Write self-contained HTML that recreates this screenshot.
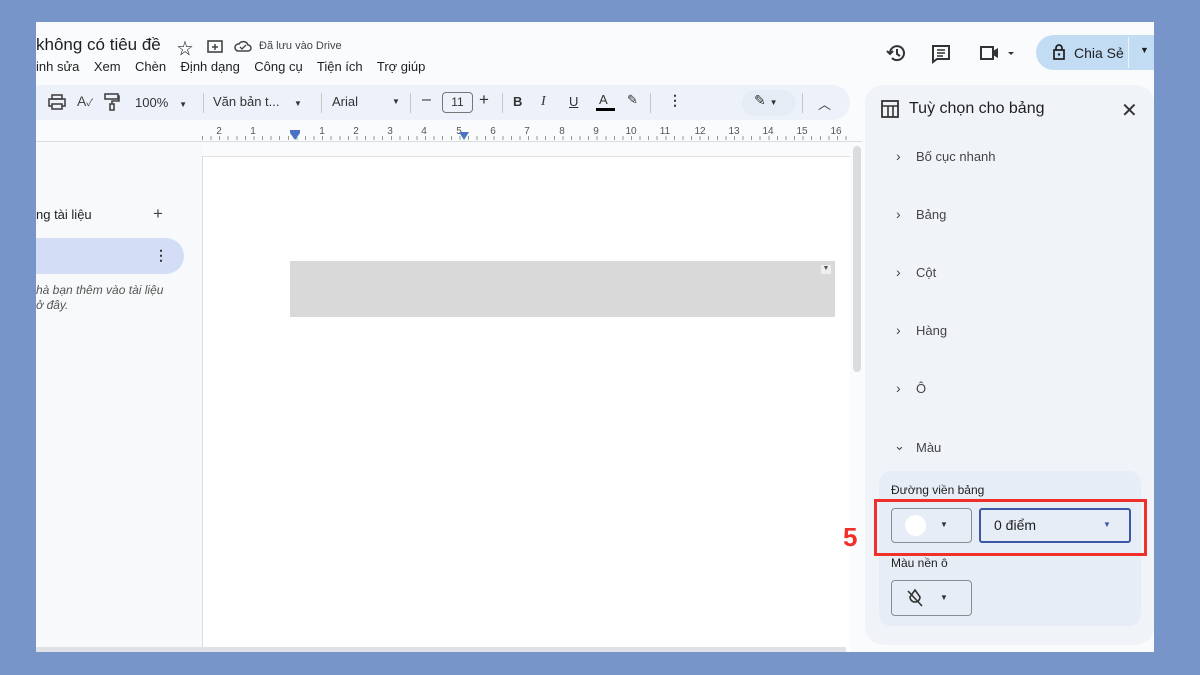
<!DOCTYPE html><html><head><meta charset="utf-8"><style>
*{margin:0;padding:0;box-sizing:border-box}
body{width:1200px;height:675px;background:#7895ca;font-family:"Liberation Sans","Noto Sans CJK SC",sans-serif;position:relative;overflow:hidden;color:#1f1f1f}
.a{position:absolute}
.scr{left:36px;top:22px;width:1118px;height:630px;background:#f9fbfd;overflow:hidden}
.t{position:absolute;white-space:nowrap}
.rn{position:absolute;top:104px;font-size:10px;color:#555;width:20px;margin-left:-10px;text-align:center}
</style></head><body>
<div class="a scr">
 <div class="a" style="left:0;top:0;width:1118px;height:63px;background:#f9fbfd"></div>
 <div class="t" style="left:0;top:13px;font-size:17px;color:#1f1f1f">không có tiêu đề</div>
 <div class="t" style="left:141px;top:13px;font-size:16px">☆</div>
 <svg class="a" style="left:171px;top:17px" width="16" height="14"><rect x="1" y="2" width="14" height="11" fill="none" stroke="#444" stroke-width="1.6"/><path d="M5 8h6M8 5v6" stroke="#444" stroke-width="1.5"/></svg>
 <svg class="a" style="left:198px;top:17px" width="18" height="13"><path d="M4 12h10a3 3 0 0 0 0-6 5 5 0 0 0-9-1 3.5 3.5 0 0 0-1 7z" fill="none" stroke="#444" stroke-width="1.5"/><path d="M6 8l2 2 4-4" fill="none" stroke="#444" stroke-width="1.3"/></svg>
 <div class="t" style="left:223px;top:18px;font-size:11px;color:#444">Đã lưu vào Drive</div>
 <div class="t" style="left:0;top:37px;font-size:13px;color:#1f1f1f">inh sửa&nbsp;&nbsp;&nbsp; Xem&nbsp;&nbsp;&nbsp; Chèn&nbsp;&nbsp;&nbsp; Định dạng&nbsp;&nbsp;&nbsp; Công cụ&nbsp;&nbsp;&nbsp; Tiện ích&nbsp;&nbsp;&nbsp; Trợ giúp</div>
 <svg class="a" style="left:850px;top:21px" width="20" height="20"><path d="M4 10a7 7 0 1 1 2 5" fill="none" stroke="#333" stroke-width="2"/><path d="M1 8l3 3 3-3" fill="none" stroke="#333" stroke-width="2"/><path d="M11 6v5l3 2" fill="none" stroke="#333" stroke-width="2"/></svg>
 <svg class="a" style="left:895px;top:22px" width="20" height="20"><path d="M2 2h16v13H6l-4 3z" fill="none" stroke="#333" stroke-width="2"/><path d="M6 6h8M6 9h8M6 12h6" stroke="#333" stroke-width="1.6"/></svg>
 <svg class="a" style="left:943px;top:23px" width="36" height="16"><path d="M2 2h12v12H2z" fill="none" stroke="#333" stroke-width="2"/><path d="M14 6l5-3v10l-5-3z" fill="#333"/><path d="M29 7l3 3 3-3z" fill="#333"/></svg>
 <div class="a" style="left:1000px;top:13px;width:118px;height:35px;background:#c2dcf3;border-radius:18px 0 0 18px"></div>
 <div class="a" style="left:1092px;top:15px;width:1px;height:31px;background:#f0f4f9"></div>
 <svg class="a" style="left:1016px;top:22px" width="14" height="16"><rect x="2" y="6" width="10" height="9" fill="none" stroke="#1f1f1f" stroke-width="1.7"/><path d="M4 6V4a3 3 0 0 1 6 0v2" fill="none" stroke="#1f1f1f" stroke-width="1.7"/><circle cx="7" cy="10.5" r="1.2" fill="#1f1f1f"/></svg>
 <div class="t" style="left:1038px;top:23px;font-size:14px;color:#1f1f1f">Chia Sẻ</div>
 <div class="t" style="left:1104px;top:23px;font-size:9px">▼</div>
 <div class="a" style="left:0;top:63px;width:814px;height:35px;background:#edf2fa;border-radius:0 18px 18px 0"></div>
 <svg class="a" style="left:12px;top:72px" width="18" height="16"><rect x="4" y="1" width="10" height="4" fill="none" stroke="#444" stroke-width="1.6"/><rect x="1" y="5" width="16" height="7" fill="none" stroke="#444" stroke-width="1.6"/><rect x="4" y="10" width="10" height="5" fill="#edf2fa" stroke="#444" stroke-width="1.6"/></svg>
 <div class="t" style="left:41px;top:71px;font-size:14px;color:#444">A<span style="font-size:10px">✓</span></div>
 <svg class="a" style="left:68px;top:71px" width="16" height="18"><rect x="1" y="1" width="13" height="5" fill="none" stroke="#444" stroke-width="1.6"/><path d="M14 3h1v5H8v3" fill="none" stroke="#444" stroke-width="1.6"/><rect x="6" y="11" width="4" height="6" fill="none" stroke="#444" stroke-width="1.6"/></svg>
 <div class="t" style="left:99px;top:73px;font-size:13px;color:#333">100%&nbsp;&nbsp;&nbsp;<span style="font-size:8px">▼</span></div>
 <div class="a" style="left:167px;top:71px;width:1px;height:20px;background:#c7c7c7"></div>
 <div class="t" style="left:177px;top:72px;font-size:13px;color:#333">Văn bản t...&nbsp;&nbsp;&nbsp;&nbsp;<span style="font-size:8px">▼</span></div>
 <div class="a" style="left:285px;top:71px;width:1px;height:20px;background:#c7c7c7"></div>
 <div class="t" style="left:296px;top:72px;font-size:13px;color:#333">Arial</div>
 <div class="t" style="left:356px;top:75px;font-size:8px;color:#333">▼</div>
 <div class="a" style="left:374px;top:71px;width:1px;height:20px;background:#c7c7c7"></div>
 <div class="t" style="left:386px;top:69px;font-size:16px;color:#333">–</div>
 <div class="a" style="left:406px;top:70px;width:31px;height:21px;border:1px solid #747775;border-radius:4px;font-size:12px;text-align:center;line-height:19px;color:#333">11</div>
 <div class="t" style="left:443px;top:68px;font-size:17px;color:#333">+</div>
 <div class="a" style="left:466px;top:71px;width:1px;height:20px;background:#c7c7c7"></div>
 <div class="t" style="left:477px;top:72px;font-size:13px;font-weight:bold;color:#333">B</div>
 <div class="t" style="left:505px;top:72px;font-size:14px;font-style:italic;font-family:'Liberation Serif',serif;color:#333">I</div>
 <div class="t" style="left:533px;top:72px;font-size:13px;text-decoration:underline;color:#333">U</div>
 <div class="t" style="left:563px;top:70px;font-size:13px;color:#333">A</div>
 <div class="a" style="left:560px;top:86px;width:19px;height:3px;background:#000"></div>
 <div class="t" style="left:591px;top:70px;font-size:13px;color:#333">✎</div>
 <div class="a" style="left:614px;top:71px;width:1px;height:20px;background:#c7c7c7"></div>
 <div class="t" style="left:632px;top:70px;font-size:14px;font-weight:bold;color:#333">⋮</div>
 <div class="a" style="left:706px;top:68px;width:54px;height:26px;background:#e6ecf6;border-radius:13px"></div>
 <div class="t" style="left:718px;top:70px;font-size:14px;color:#333">✎ <span style="font-size:8px">▼</span></div>
 <div class="a" style="left:766px;top:71px;width:1px;height:20px;background:#c7c7c7"></div>
 <div class="t" style="left:782px;top:72px;font-size:13px;color:#333">︿</div>
 <!-- ruler -->
 <div class="a" style="left:0;top:100px;width:826px;height:20px;background:#f9fbfd;border-bottom:1px solid #dadce0"></div>
 <div class="rn" style="left:183px">2</div><div class="rn" style="left:217px">1</div>
 <div class="rn" style="left:286px">1</div><div class="rn" style="left:320px">2</div><div class="rn" style="left:354px">3</div><div class="rn" style="left:388px">4</div><div class="rn" style="left:423px">5</div><div class="rn" style="left:457px">6</div><div class="rn" style="left:491px">7</div><div class="rn" style="left:526px">8</div><div class="rn" style="left:560px">9</div><div class="rn" style="left:595px">10</div><div class="rn" style="left:629px">11</div><div class="rn" style="left:664px">12</div><div class="rn" style="left:698px">13</div><div class="rn" style="left:732px">14</div><div class="rn" style="left:766px">15</div><div class="rn" style="left:800px">16</div>
 <div class="a" style="left:166px;top:114px;width:650px;height:4px;background:repeating-linear-gradient(90deg,#999 0 1px,transparent 1px 8.58px)"></div>
 <div class="a" style="left:254px;top:108px;width:10px;height:10px;background:#4a72c4;clip-path:polygon(0 0,100% 0,100% 30%,50% 100%,0 30%)"></div>
 <div class="a" style="left:423px;top:110px;width:10px;height:8px;background:#4a72c4;clip-path:polygon(0 0,100% 0,50% 100%)"></div>
 <div class="a" style="left:0;top:121px;width:166px;height:509px;background:#f8f9fa"></div>
 <div class="t" style="left:0;top:185px;font-size:13px;color:#1f1f1f">ng tài liệu</div>
 <div class="t" style="left:117px;top:182px;font-size:17px;color:#444">+</div>
 <div class="a" style="left:0;top:216px;width:148px;height:36px;background:#d3def6;border-radius:0 18px 18px 0"></div>
 <div class="t" style="left:118px;top:225px;font-size:14px;font-weight:bold;color:#333">⋮</div>
 <div class="t" style="left:0;top:261px;font-size:12px;font-style:italic;color:#555;line-height:15px">hà bạn thêm vào tài liệu<br>ở đây.</div>
 <div class="a" style="left:166px;top:134px;width:648px;height:500px;background:#fff;border-left:1px solid #dadce0;border-top:1px solid #e3e3e3"></div>
 <div class="a" style="left:254px;top:239px;width:545px;height:56px;background:#d9d9d9"></div>
 <div class="a" style="left:785px;top:243px;width:10px;height:9px;background:#eee;font-size:7px;text-align:center;color:#555">▼</div>
 <div class="a" style="left:817px;top:124px;width:8px;height:226px;background:#dadce0;border-radius:4px"></div>
 <div class="a" style="left:0;top:625px;width:810px;height:5px;background:#dfe3e8"></div>
 <div class="a" style="left:829px;top:63px;width:289px;height:560px;background:#f0f4f9;border-radius:18px"></div>
 <svg class="a" style="left:845px;top:78px" width="18" height="18"><rect x="1" y="1" width="16" height="16" fill="none" stroke="#333" stroke-width="1.8"/><path d="M1 6h16M7 6v11M12 6v11" stroke="#333" stroke-width="1.6"/></svg>
 <div class="t" style="left:873px;top:78px;font-size:16px;color:#1f1f1f">Tuỳ chọn cho bảng</div>
 <div class="t" style="left:1085px;top:76px;font-size:20px;color:#333">✕</div>
 <div class="t" style="left:860px;top:126px;font-size:14px;color:#444">›</div><div class="t" style="left:880px;top:127px;font-size:13px;color:#444">Bố cục nhanh</div>
 <div class="t" style="left:860px;top:184px;font-size:14px;color:#444">›</div><div class="t" style="left:880px;top:185px;font-size:13px;color:#444">Bảng</div>
 <div class="t" style="left:860px;top:242px;font-size:14px;color:#444">›</div><div class="t" style="left:880px;top:243px;font-size:13px;color:#444">Cột</div>
 <div class="t" style="left:860px;top:300px;font-size:14px;color:#444">›</div><div class="t" style="left:880px;top:301px;font-size:13px;color:#444">Hàng</div>
 <div class="t" style="left:860px;top:358px;font-size:14px;color:#444">›</div><div class="t" style="left:880px;top:359px;font-size:13px;color:#444">Ô</div>
 <div class="t" style="left:858px;top:416px;font-size:13px;color:#444">⌄</div><div class="t" style="left:880px;top:418px;font-size:13px;color:#444">Màu</div>
 <div class="a" style="left:843px;top:449px;width:262px;height:155px;background:#e7edf6;border-radius:12px"></div>
 <div class="t" style="left:855px;top:461px;font-size:12px;color:#1f1f1f">Đường viền bảng</div>
 <div class="a" style="left:855px;top:486px;width:81px;height:35px;border:1px solid #8a8d91;border-radius:4px"></div>
 <div class="a" style="left:869px;top:493px;width:21px;height:21px;background:#fff;border-radius:50%"></div>
 <div class="t" style="left:904px;top:498px;font-size:8px;color:#333">▼</div>
 <div class="a" style="left:943px;top:486px;width:152px;height:35px;border:2px solid #3b57a5;border-radius:3px"></div>
 <div class="t" style="left:958px;top:495px;font-size:14px;color:#1f1f1f">0 điểm</div>
 <div class="t" style="left:1067px;top:498px;font-size:8px;color:#3b57a5">▼</div>
 <div class="a" style="left:838px;top:477px;width:273px;height:57px;border:3px solid #f2302b"></div>
 <div class="t" style="left:855px;top:534px;font-size:12px;color:#1f1f1f">Màu nền ô</div>
 <div class="a" style="left:855px;top:558px;width:81px;height:36px;border:1px solid #8a8d91;border-radius:4px"></div>
 <svg class="a" style="left:870px;top:566px" width="18" height="20"><path d="M9 2l5 7a5 5 0 1 1-10 0z" fill="none" stroke="#333" stroke-width="1.6"/><path d="M2 3l14 15" stroke="#333" stroke-width="1.6"/></svg>
 <div class="t" style="left:904px;top:571px;font-size:8px;color:#333">▼</div>
</div>
<div class="t" style="left:843px;top:522px;font-size:26px;font-weight:bold;color:#f2302b">5</div>
</body></html>
